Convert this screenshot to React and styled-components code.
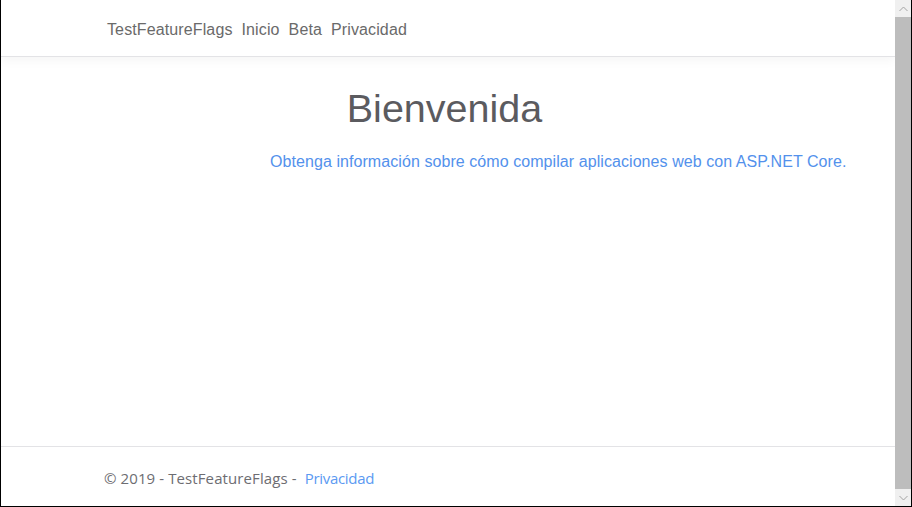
import React from 'react'
import styled, { createGlobalStyle } from 'styled-components'

const Global = createGlobalStyle`
html, body {
  margin: 0;
  padding: 0;
  background: #fff;
}
`

const Frame = styled.div`
width: 912px;
height: 507px;
box-sizing: border-box;
border: 1px solid #000;
border-top: none;
display: flex;
overflow: hidden;
`

const Page = styled.div`
flex: 1;
display: flex;
flex-direction: column;
min-width: 0;
`

const Navbar = styled.nav`
height: 57px;
box-sizing: border-box;
padding: 3px 0 0 106px;
border-bottom: 1px solid #e3e3e6;
box-shadow: 0 4px 10px rgba(0, 0, 0, 0.04);
display: flex;
align-items: center;
gap: 9px;
font: 16px 'Liberation Sans', Arial, sans-serif;
letter-spacing: 0.12px;
color: #6a6a6a;
`

const NavItem = styled.span``

const Main = styled.main`
flex: 1;
display: flex;
flex-direction: column;
`

const Title = styled.h1`
margin: 29px 0 0;
text-align: center;
font: 400 39.5px 'Liberation Sans', Arial, sans-serif;
color: #5b5b5f;
padding-right: 7px;
`

const Lead = styled.p`
margin: 22px 0 0 269px;
font: 16px 'Liberation Sans', Arial, sans-serif;
letter-spacing: 0.07px;
color: #5391ec;
`

const Footer = styled.footer`
height: 60px;
border-top: 1px solid #e3e3e6;
display: flex;
align-items: center;
padding: 3px 0 0 103px;
box-sizing: border-box;
font: 15px 'Open Sans', 'Noto Sans', sans-serif;
color: #6d6d72;
gap: 8px;
`

const FooterText = styled.span`
letter-spacing: 0.1px;
`

const FooterLink = styled.a`
color: #5b9af2;
text-decoration: none;
letter-spacing: -0.3px;
`

const Scrollbar = styled.div`
width: 16px;
display: flex;
flex-direction: column;
background: #f0f0f0;
`

const Arrow = styled.div`
height: 17px;
display: flex;
align-items: center;
justify-content: center;
background: #f0f0f0;
`

const Thumb = styled.div`
flex: 1;
background: #bdbdbd;
`

const Chevron = ({ up }) => (
  <svg width="9" height="6" viewBox="0 0 9 6">
    <path
      d={up ? 'M0.5 5 L4.5 1 L8.5 5' : 'M0.5 1 L4.5 5 L8.5 1'}
      fill="none"
      stroke="#a3a3a3"
      strokeWidth="1"
    />
  </svg>
)

export default function App() {
  return (
    <>
      <Global />
      <Frame>
        <Page>
          <Navbar>
            <NavItem>TestFeatureFlags</NavItem>
            <NavItem>Inicio</NavItem>
            <NavItem>Beta</NavItem>
            <NavItem>Privacidad</NavItem>
          </Navbar>
          <Main>
            <Title>Bienvenida</Title>
            <Lead>Obtenga información sobre cómo compilar aplicaciones web con ASP.NET Core.</Lead>
          </Main>
          <Footer>
            <FooterText>© 2019 - TestFeatureFlags -</FooterText>
            <FooterLink href="#">Privacidad</FooterLink>
          </Footer>
        </Page>
        <Scrollbar>
          <Arrow><Chevron up /></Arrow>
          <Thumb />
          <Arrow><Chevron /></Arrow>
        </Scrollbar>
      </Frame>
    </>
  )
}
